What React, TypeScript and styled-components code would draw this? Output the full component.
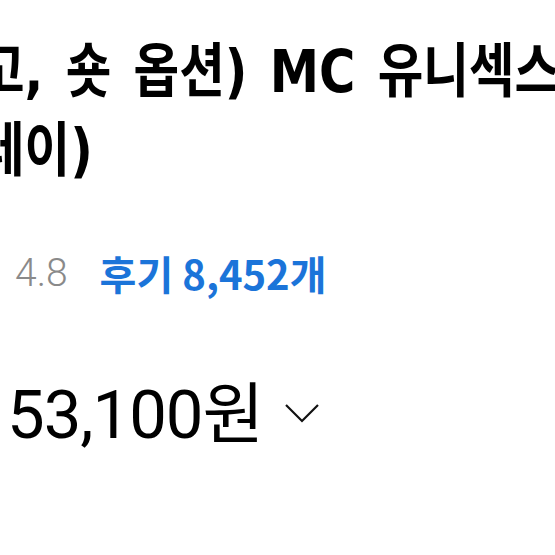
import React from 'react';
import styled, { createGlobalStyle } from 'styled-components';

const GlobalStyle = createGlobalStyle`
  html, body {
    margin: 0;
    padding: 0;
    background: #ffffff;
    overflow: hidden;
  }
  body {
    font-family: Roboto, "Noto Sans CJK KR", "Noto Sans", sans-serif;
    color: #000;
  }
`;

const Page = styled.div`
  width: 555px;
  height: 555px;
  overflow: hidden;
  display: flex;
  flex-direction: column;
`;

// the phone font has narrow hangul and wide latin: wide latin face + squeeze
const Title = styled.h1`
  margin: 32px 0 0 -21px;
  font-family: "DejaVu Sans", "Noto Sans CJK KR", sans-serif;
  font-weight: 700;
  font-size: 59px;
  line-height: 79px;
  word-spacing: 6px;
  white-space: nowrap;
  transform: scaleX(0.84);
  transform-origin: left top;
`;

const RatingRow = styled.div`
  display: flex;
  align-items: center;
  gap: 32px;
  margin: 54px 0 0 15px;
`;

const Score = styled.span`
  font-family: Roboto, sans-serif;
  font-weight: 300;
  font-size: 39px;
  color: #8a8a8a;
`;

const ReviewLink = styled.a`
  font-family: "Noto Sans CJK KR", sans-serif;
  font-weight: 700;
  font-size: 40px;
  color: #1b74d9;
  text-decoration: none;
`;

const PriceRow = styled.div`
  display: flex;
  align-items: center;
  gap: 21px;
  margin: 58px 0 0 7px;
`;

const Price = styled.span`
  font-family: Roboto, "Noto Sans CJK KR", sans-serif;
  font-weight: 400;
  font-size: 67px;
  letter-spacing: -1px;
`;

const ChevronIcon = styled.svg`
  margin-top: 8px;
`;

const Chevron = () => (
  <ChevronIcon width="36" height="22" viewBox="0 0 36 22" fill="none">
    <path d="M2 3 L18 19 L34 3" stroke="#111" strokeWidth="2.2" />
  </ChevronIcon>
);

export default function App() {
  return (
    <Page>
      <GlobalStyle />
      <Title>
        고, 숏 옵션) MC 유니섹스 스웨트셔츠
        <br />
        레이)
      </Title>
      <RatingRow>
        <Score>4.8</Score>
        <ReviewLink href="#">후기 8,452개</ReviewLink>
      </RatingRow>
      <PriceRow>
        <Price>53,100원</Price>
        <Chevron />
      </PriceRow>
    </Page>
  );
}
